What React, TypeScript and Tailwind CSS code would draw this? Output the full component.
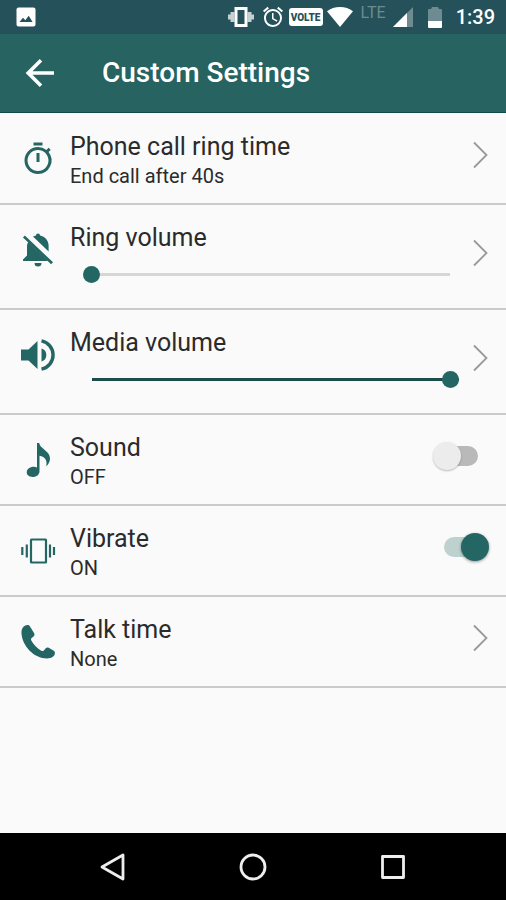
import { useState } from 'react';
import type { CSSProperties, ReactNode } from 'react';
import { MdAlarm, MdOutlineTimer } from 'react-icons/md';

function PictureIcon() {
  return (
    <svg viewBox="0 0 20 20" className="h-5 w-5" aria-hidden="true">
      <rect x="0.5" y="0.5" width="19" height="19" rx="2" fill="#fff" />
      <path d="M3.5 15 7 10.7l2.3 2.6 3.4-4.6L16.6 15z" fill="#24515a" />
    </svg>
  );
}

function StatusVibrateIcon() {
  return (
    <svg viewBox="0 0 26 20" className="h-5 w-[26px]" aria-hidden="true">
      <path d="M0 7.5h2.500v5H0zM2.500 5h4v10h-4zM23.500 7.500h2.500v5h-2.500zM19.500 5h4v10h-4z" fill="#c5d0d2" />
      <rect x="8" y="1.500" width="10" height="17" fill="none" stroke="#fff" strokeWidth="3" />
    </svg>
  );
}

function WifiIcon() {
  return (
    <svg viewBox="0 0 26 20" className="h-5 w-[26px]" aria-hidden="true">
      <path d="M13 20 0 4.200C3.500 1.500 8 0 13 0s9.500 1.500 13 4.200z" fill="#fff" />
    </svg>
  );
}

function SignalIcon() {
  return (
    <svg viewBox="0 0 20 20" className="h-5 w-5" aria-hidden="true">
      <path d="M20 0v20H0z" fill="#6d8b90" />
      <path d="M14 6v14H0z" fill="#fff" />
    </svg>
  );
}

function BatteryIcon() {
  return (
    <svg viewBox="0 0 14 21" className="h-[21px] w-[14px]" aria-hidden="true">
      <path d="M4 0h6l1 2h2a1 1 0 0 1 1 1v11H0V3a1 1 0 0 1 1-1h2z" fill="#6d8b90" />
      <path d="M0 14h14v6a1 1 0 0 1-1 1H1a1 1 0 0 1-1-1z" fill="#fff" />
    </svg>
  );
}

function BackArrowIcon() {
  return (
    <svg viewBox="0 0 30 28" className="h-7 w-[30px]" fill="none" stroke="#fff" strokeWidth="3.600" aria-hidden="true">
      <path d="M29 14H3M16 1.300 3.200 14 16 26.700" />
    </svg>
  );
}

function BellOffIcon() {
  return (
    <svg viewBox="0 0 36 36" className="h-9 w-9" fill="#246663" aria-hidden="true">
      <path d="M13 4.600c.9-.5 1.900-.9 3-1.100a2 2 0 0 1 4 0c5 1 8.600 5 8.600 10.300v5.700z" />
      <path d="M8.300 10 28 29H3v-1.500l4-4V14.500c0-1.700.5-3.200 1.300-4.500zM14.500 31h7a3.500 3.500 0 0 1-7 0z" />
      <path d="M4.800 3.500 33 30.300l-1.900 2L3 5.500z" />
    </svg>
  );
}

function PhoneIcon() {
  return (
    <svg viewBox="0 0 36 36" className="h-9 w-9" fill="#246663" aria-hidden="true">
      <path d="M7.500 1C3.500 1.200 1.200 4.500 1.500 9.500 2.300 22 14 34.500 27 34.500c4.300 0 7.600-2 7.900-5.200.1-1.300-.4-2-1.500-2.700l-4.300-2.700c-1.400-.8-2.600-.6-3.600.5l-1.700 2c-.7.8-1.500.9-2.500.4-4-2.200-7.800-6.200-10-10.300-.5-1-.4-1.700.4-2.400l1.800-1.600c1.100-1 1.300-2.200.5-3.600L10 2.400C9.300 1.400 8.600 1 7.500 1z" />
    </svg>
  );
}

function SpeakerIcon() {
  return (
    <svg viewBox="0 0 36 36" className="h-9 w-9" aria-hidden="true">
      <path d="M1 12.500h7.500L17.500 4v28L8.500 23.500H1z" fill="#246663" />
      <path d="M21.500 11.500a6.800 6.800 0 0 1 0 13z" fill="#246663" />
      <path d="M21.500 3.800a14.500 14.500 0 0 1 0 28.400" fill="none" stroke="#246663" strokeWidth="3.400" />
    </svg>
  );
}

function NoteIcon() {
  return (
    <svg viewBox="0 0 36 36" className="h-9 w-9" fill="#246663" aria-hidden="true">
      <path d="M17 1h2.200c.5 5.800 10.800 7.600 10.800 15.500 0 2.800-1.500 6-3.800 7.700 1.400-5.500-1-9.200-6.700-10.400v15.400c0 3.400-3 5.800-6.800 5.800-3.600 0-6-2-6-4.700 0-3.200 3.200-5.600 6.900-5.600 1.300 0 2.500.3 3.400.8z" />
    </svg>
  );
}

function VibrateIcon() {
  return (
    <svg viewBox="0 0 36 36" className="h-9 w-9" fill="none" stroke="#246663" aria-hidden="true">
      <rect x="11" y="6.500" width="15" height="23" rx="0.500" strokeWidth="2.200" />
      <path d="M2.300 14v8M34 14v8M6.800 11.500v13M30 11.500v13" strokeWidth="2.200" />
    </svg>
  );
}

function ChevronIcon() {
  return (
    <svg viewBox="0 0 16 28" className="h-7 w-4" fill="none" stroke="#999" strokeWidth="1.800" aria-hidden="true">
      <path d="M1 1.500 13.500 14 1 26.500" />
    </svg>
  );
}

interface SettingRowProps {
  icon: ReactNode;
  title: string;
  htmlFor?: string;
  subtitle?: string;
  children?: ReactNode;
  action: ReactNode;
}

function SettingRow({ icon, title, htmlFor, subtitle, children, action }: SettingRowProps) {
  return (
    <li className="flex gap-[14px] border-b-2 border-[#cbcbcb] pt-[17px] pr-[17px] pb-[14px] pl-5">
      <div className="mt-[10px] h-9 w-9 shrink-0 text-[#246663]">{icon}</div>
      <div className="min-w-0 flex-1">
        {htmlFor ? (
          <label htmlFor={htmlFor} className="block text-[25px] leading-8">
            {title}
          </label>
        ) : (
          <h2 className="text-[25px] leading-8">{title}</h2>
        )}
        {subtitle && <p className="text-xl leading-[26px]">{subtitle}</p>}
        {children}
      </div>
      <div className="flex shrink-0 items-center pb-[10px]">{action}</div>
    </li>
  );
}

function MoreButton({ label }: { label: string }) {
  return (
    <button type="button" aria-label={label} className="block">
      <ChevronIcon />
    </button>
  );
}

function VolumeSlider({ id, initial }: { id: string; initial: number }) {
  const [value, setValue] = useState(initial);

  return (
    <div className="flex h-10 items-center pl-[13px]">
      <input
        id={id}
        type="range"
        min={0}
        max={100}
        value={value}
        onChange={(e) => setValue(Number(e.target.value))}
        style={{ '--fill': `${value}%` } as CSSProperties}
        className="h-5 w-full appearance-none bg-transparent [&::-webkit-slider-runnable-track]:h-[3px] [&::-webkit-slider-runnable-track]:bg-[linear-gradient(to_right,transparent_9px,#1d4d4a_9px,#1d4d4a_var(--fill),#d6d6d6_var(--fill),#d6d6d6_calc(100%-9px),transparent_calc(100%-9px))] [&::-webkit-slider-thumb]:-mt-[7px] [&::-webkit-slider-thumb]:h-[17px] [&::-webkit-slider-thumb]:w-[17px] [&::-webkit-slider-thumb]:appearance-none [&::-webkit-slider-thumb]:rounded-full [&::-webkit-slider-thumb]:bg-[#246663]"
      />
    </div>
  );
}

function Toggle({ id, checked, onChange }: { id: string; checked: boolean; onChange: (on: boolean) => void }) {
  return (
    <span className="relative flex h-7 w-14 items-center justify-center">
      <input
        id={id}
        type="checkbox"
        role="switch"
        checked={checked}
        onChange={(e) => onChange(e.target.checked)}
        className="h-5 w-[34px] appearance-none rounded-full bg-[#b9b9b9] checked:bg-[#bdd1cf]"
      />
      <span
        className={
          checked
            ? 'pointer-events-none absolute top-0 right-0 h-7 w-7 rounded-full bg-[#246663] shadow-[0_1px_3px_rgba(0,0,0,0.4)]'
            : 'pointer-events-none absolute top-0 left-0 h-7 w-7 rounded-full bg-[#ececec] shadow-[0_1px_2px_rgba(0,0,0,0.25)]'
        }
      />
    </span>
  );
}

export default function App() {
  const [sound, setSound] = useState(false);
  const [vibrate, setVibrate] = useState(true);

  return (
    <div className="flex min-h-screen flex-col bg-[#fafafa] font-[Roboto,sans-serif] text-[#2b2b2b]">
      <div className="flex h-[34px] items-center justify-between bg-[#24515a] pr-[11px] pl-4 text-white">
        <PictureIcon />
        <div className="flex items-center">
          <StatusVibrateIcon />
          <MdAlarm className="ml-[7px] h-6 w-6" />
          <span className="ml-1 flex h-[18px] w-[34px] items-center justify-center rounded-[3px] bg-white text-[10px] font-black text-[#24515a]">
            VOLTE
          </span>
          <span className="ml-1">
            <WifiIcon />
          </span>
          <span className="ml-2 pb-2 text-base leading-4 text-[#6d8b90]">LTE</span>
          <span className="ml-[7px]">
            <SignalIcon />
          </span>
          <span className="ml-[15px]">
            <BatteryIcon />
          </span>
          <span className="ml-[14px] text-xl leading-6 font-medium">1:39</span>
        </div>
      </div>

      <header className="flex h-[79px] items-center border-b border-[#0f4a48] bg-[#266361] pl-[25px] text-white">
        <button type="button" aria-label="Back">
          <BackArrowIcon />
        </button>
        <h1 className="ml-[47px] text-[28px] leading-8 font-medium">Custom Settings</h1>
      </header>

      <main className="flex-1 pt-px">
        <ul>
          <SettingRow
            icon={<MdOutlineTimer className="h-9 w-9" />}
            title="Phone call ring time"
            subtitle="End call after 40s"
            action={<MoreButton label="Change phone call ring time" />}
          />
          <SettingRow
            icon={<BellOffIcon />}
            title="Ring volume"
            htmlFor="ring-volume"
            action={<MoreButton label="Ring volume options" />}
          >
            <VolumeSlider id="ring-volume" initial={0} />
          </SettingRow>
          <SettingRow
            icon={<SpeakerIcon />}
            title="Media volume"
            htmlFor="media-volume"
            action={<MoreButton label="Media volume options" />}
          >
            <VolumeSlider id="media-volume" initial={100} />
          </SettingRow>
          <SettingRow
            icon={<NoteIcon />}
            title="Sound"
            htmlFor="sound"
            subtitle={sound ? 'ON' : 'OFF'}
            action={<Toggle id="sound" checked={sound} onChange={setSound} />}
          />
          <SettingRow
            icon={<VibrateIcon />}
            title="Vibrate"
            htmlFor="vibrate"
            subtitle={vibrate ? 'ON' : 'OFF'}
            action={<Toggle id="vibrate" checked={vibrate} onChange={setVibrate} />}
          />
          <SettingRow
            icon={<PhoneIcon />}
            title="Talk time"
            subtitle="None"
            action={<MoreButton label="Change talk time" />}
          />
        </ul>
      </main>

      <nav className="flex h-[67px] items-center justify-center gap-28 bg-black">
        <button type="button" aria-label="Go back">
          <svg viewBox="0 0 28 28" className="h-7 w-7" fill="none" stroke="#eee" strokeWidth="2.800" strokeLinejoin="round">
            <path d="M24 2v24L3 14z" />
          </svg>
        </button>
        <button type="button" aria-label="Home">
          <svg viewBox="0 0 28 28" className="h-7 w-7" fill="none" stroke="#eee" strokeWidth="2.800">
            <circle cx="14" cy="14" r="12" />
          </svg>
        </button>
        <button type="button" aria-label="Recent apps">
          <svg viewBox="0 0 28 28" className="h-7 w-7" fill="none" stroke="#eee" strokeWidth="2.800" strokeLinejoin="round">
            <rect x="3.500" y="3.500" width="21" height="21" />
          </svg>
        </button>
      </nav>
    </div>
  );
}
